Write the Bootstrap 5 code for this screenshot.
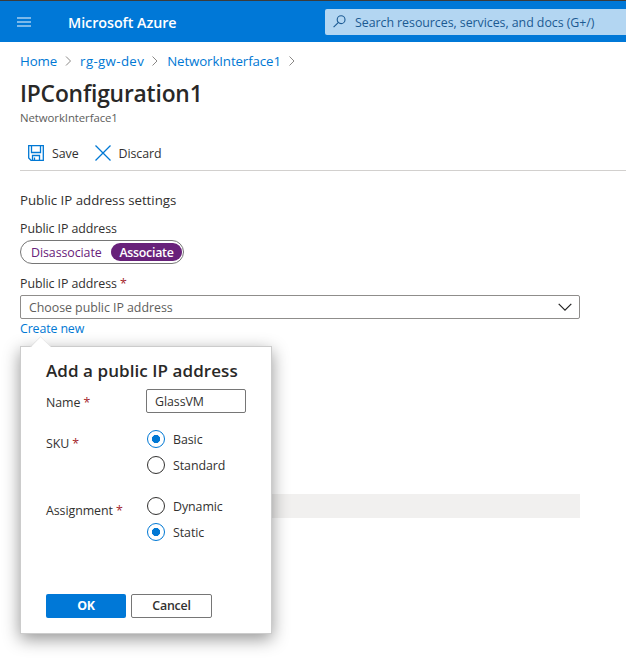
<!DOCTYPE html>
<html lang="en">
<head>
<meta charset="utf-8">
<meta name="viewport" content="width=device-width, initial-scale=1">
<title>IPConfiguration1 - Microsoft Azure</title>
<link href="https://cdn.jsdelivr.net/npm/bootstrap@5.3.0/dist/css/bootstrap.min.css" rel="stylesheet">
<style>
  body { min-height: 100vh; font-family: "Open Sans", "Noto Sans", sans-serif; font-size: 12.4px; line-height: 20px; letter-spacing: -.07px; color: #323130; background: #fff; }
  a { color: #0078d4; text-decoration: none; }
  svg { display: block; flex: none; }
  .az-top { height: 42px; background: #0078d7; border-top: 1px solid #3b3b3b; padding-left: 17px; }
  .az-brand { margin-left: 37px; width: 257px; padding-top: 3px; color: #fff; font-size: 14.3px; font-weight: 600; letter-spacing: -.04px; }
  .az-search { height: 26px; background: #b3d6f2; border-radius: 2px 0 0 2px; color: #1b5a93; padding-left: 8px; }
  .az-search span { margin-left: 9px; padding-top: 2px; letter-spacing: -.05px; }
  .az-main { padding-left: 20px; }
  .az-crumbs { height: 38px; font-size: 13.3px; letter-spacing: -.12px; }
  .az-crumbs .az-group { letter-spacing: .34px; }
  .az-title { height: 28px; line-height: 28px; font-size: 22.8px; font-weight: 600; letter-spacing: -.18px; color: #292827; }
  .az-sub { height: 18px; line-height: 19px; font-size: 11.4px; letter-spacing: -.08px; color: #605e5c; }
  .az-tools { height: 45px; padding: 16px 0 0 8px; border-bottom: 1px solid #d2d0ce; }
  .az-tools span { padding-top: 2px; }
  .az-tools svg { margin-top: -1px; }
  .az-section { margin-top: 19px; font-size: 13.3px; letter-spacing: -.03px; }
  .az-caption { margin-top: 9px; }
  .az-toggle { width: 164px; height: 24px; margin-top: 1px; border: 1px solid #767676; border-radius: 12px; padding: 0 1px 0 10px; color: #68217a; }
  .az-toggle b { width: 71px; height: 18px; line-height: 19px; border-radius: 9px; background: #68217a; color: #fff; font-weight: 600; letter-spacing: -.28px; }
  .az-toggle span { padding-top: 1px; }
  .az-field { padding-top: 10px; }
  .az-req { color: #a4262c; }
  .az-select { width: 560px; height: 24px; margin-top: 1px; border: 1px solid #8f8d8b; border-radius: 2px; padding: 0 7px 0 8px; color: #605e5c; }
  .az-select span { padding-top: 2px; letter-spacing: -.04px; }
  .az-create { height: 19px; line-height: 19px; letter-spacing: -.13px; }
  .az-bar { width: 560px; height: 24px; margin-top: 156px; background: #f1f0ef; }
  .az-pop { left: 0; top: 27px; width: 252px; height: 288px; background: #fff; border: 1px solid #ccc; padding: 14px 25px 15px; box-shadow: 0 5px 16px rgba(0,0,0,.42); }
  .az-beak { left: 9px; top: -11px; }
  .az-pop h2 { height: 20px; line-height: 20px; margin: 0; font-size: 17px; font-weight: 600; letter-spacing: .07px; color: #292827; white-space: nowrap; }
  .az-label { width: 100px; }
  .az-input { width: 100px; height: 24px; line-height: 22px; border: 1px solid #767676; border-radius: 2px; padding: 0 8px; background: #fff; color: inherit; letter-spacing: inherit; }
  .az-sku { margin-top: 17px; }
  .az-assign { margin-top: 23px; }
  .az-radio { height: 18px; gap: 8px; margin-left: 1px; }
  .az-radio span { padding-top: 1px; }
  .az-radio input { appearance: none; width: 18px; height: 18px; margin: 0; border: 1px solid #323130; border-radius: 50%; }
  .az-radio input:checked { border-color: #0078d4; background: radial-gradient(circle, #0078d4 3.8px, #fff 4.4px); }
  .az-btn { height: 24px; line-height: 22px; padding: 0; border-radius: 2px; font-size: 12.4px; font-weight: 600; letter-spacing: -.2px; }
  .az-ok { width: 80px; margin-right: 1px; background: #0078d7; color: #fff; font-weight: 700; }
  .az-cancel { width: 81px; border: 1px solid #767676; color: #323130; }
</style>
<script src="https://cdn.jsdelivr.net/npm/bootstrap@5.3.0/dist/js/bootstrap.bundle.min.js"></script>
</head>
<body>
<header class="az-top d-flex align-items-center">
  <svg width="14" height="10" viewBox="0 0 14 10"><path d="M0 1h14M0 5h14M0 9h14" stroke="#7cb9ea" stroke-width="2"/></svg>
  <div class="az-brand flex-shrink-0">Microsoft Azure</div>
  <div class="az-search d-flex align-items-center flex-grow-1 text-nowrap">
    <svg width="13" height="13" viewBox="0 0 13 13" fill="none" stroke="#1b5a93" stroke-width="1.1"><circle cx="8.1" cy="4.7" r="3.9"/><path d="M5.2 7.6.6 12.2"/></svg>
    <span>Search resources, services, and docs (G+/)</span>
  </div>
</header>
<main class="az-main">
  <nav class="az-crumbs d-flex align-items-center" aria-label="Breadcrumb">
    <a href="#">Home</a>
    <svg class="mx-2" width="7" height="10" viewBox="0 0 7 10" fill="none" stroke="#8a8886"><path d="M1 .5 5.5 5 1 9.5"/></svg>
    <a href="#" class="az-group">rg-gw-dev</a>
    <svg class="mx-2" width="7" height="10" viewBox="0 0 7 10" fill="none" stroke="#8a8886"><path d="M.5 .5 5 5 .5 9.5"/></svg>
    <a href="#">NetworkInterface1</a>
    <svg class="mx-2" width="7" height="10" viewBox="0 0 7 10" fill="none" stroke="#8a8886"><path d="M.5 .5 5 5 .5 9.5"/></svg>
  </nav>
  <h1 class="az-title mb-0">IPConfiguration1</h1>
  <div class="az-sub">NetworkInterface1</div>
  <div class="az-tools d-flex align-items-start">
    <div class="d-flex align-items-center">
      <svg width="16" height="16" viewBox="0 0 16 16" fill="none" stroke="#0078d4" stroke-width="1.3"><path d="M.7.7h14.6v14.6H3L.7 13z"/><path d="M3.5.7v6.8h9V.7M4.5 15.3v-4.8h7v4.8M6.5 12.5v2.8"/></svg>
      <span class="ms-2">Save</span>
    </div>
    <div class="d-flex align-items-center ms-3">
      <svg width="16" height="16" viewBox="0 0 16 16" fill="none" stroke="#0078d4" stroke-width="1.3"><path d="m.5.5 15 15m0-15-15 15"/></svg>
      <span class="ms-2">Discard</span>
    </div>
  </div>
  <div class="az-section">Public IP address settings</div>
  <div class="az-caption">Public IP address</div>
  <div class="az-toggle d-flex align-items-center justify-content-between"><span>Disassociate</span><b class="text-center">Associate</b></div>
  <div class="az-field">Public IP address <span class="az-req">*</span></div>
  <div class="az-select d-flex align-items-center justify-content-between">
    <span>Choose public IP address</span>
    <svg width="14" height="8" viewBox="0 0 14 8" fill="none" stroke="#222" stroke-width="1.2"><path d="m.7.8 6.3 6.3L13.3.8"/></svg>
  </div>
  <div class="position-relative">
    <div class="az-create"><a href="#">Create new</a></div>
    <section class="az-pop position-absolute d-flex flex-column">
      <svg class="az-beak position-absolute" width="22" height="12" viewBox="0 0 22 12"><path d="M0 12 11 1l11 11z" fill="#fff"/><path d="M0 11 10.5.8 21 11" fill="none" stroke="#ddd" stroke-width=".6"/></svg>
      <h2>Add a public IP address</h2>
      <div class="d-flex mt-2">
        <label class="az-label pt-1" for="ipname">Name <span class="az-req">*</span></label>
        <input class="az-input" id="ipname" value="GlassVM">
      </div>
      <div class="az-sku d-flex">
        <div class="az-label pt-1">SKU <span class="az-req">*</span></div>
        <div class="d-flex flex-column gap-2">
          <label class="az-radio d-flex align-items-center"><input type="radio" name="sku" checked><span>Basic</span></label>
          <label class="az-radio d-flex align-items-center"><input type="radio" name="sku"><span>Standard</span></label>
        </div>
      </div>
      <div class="az-assign d-flex">
        <div class="az-label pt-1">Assignment <span class="az-req">*</span></div>
        <div class="d-flex flex-column gap-2">
          <label class="az-radio d-flex align-items-center"><input type="radio" name="assign"><span>Dynamic</span></label>
          <label class="az-radio d-flex align-items-center"><input type="radio" name="assign" checked><span>Static</span></label>
        </div>
      </div>
      <div class="d-flex mt-auto gap-1">
        <button class="btn az-btn az-ok">OK</button>
        <button class="btn az-btn az-cancel">Cancel</button>
      </div>
    </section>
  </div>
  <div class="az-bar"></div>
</main>
</body>
</html>
